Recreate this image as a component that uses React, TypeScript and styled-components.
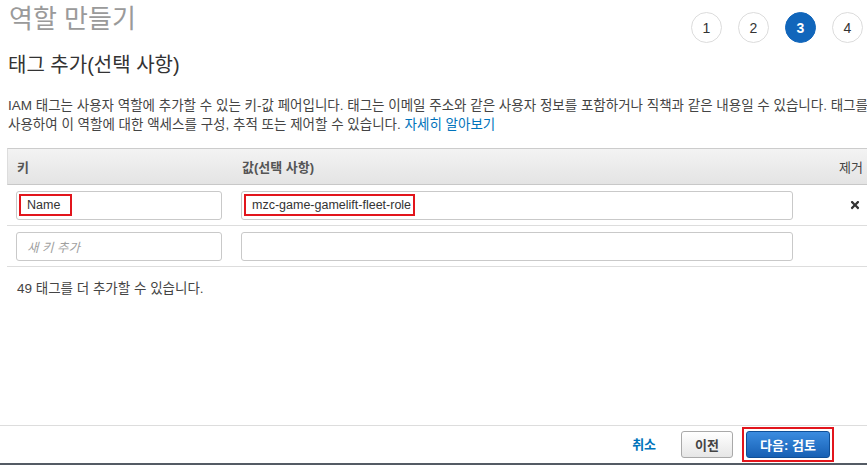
import React from "react";
import styled, { createGlobalStyle } from "styled-components";
import { FaTimes } from "react-icons/fa";

const GlobalStyle = createGlobalStyle`
  body {
    margin: 0;
    font-family: "Liberation Sans", "Noto Sans CJK KR", Arial, sans-serif;
    background: #fff;
    overflow: hidden;
  }
`;

const Page = styled.div`
  width: 867px;
  height: 465px;
  display: flex;
  flex-direction: column;
  overflow: hidden;
`;

const Content = styled.div`
  flex: 1;
  padding-left: 7px;
`;

const TopBar = styled.div`
  display: flex;
  justify-content: space-between;
  align-items: flex-start;
  height: 48px;
`;

const Title = styled.h1`
  margin: 0 0 0 2px;
  font-size: 26px;
  font-weight: 400;
  line-height: 38px;
  color: #9a9a9a;
`;

const Steps = styled.div`
  display: flex;
  gap: 16px;
  padding-top: 12px;
  padding-right: 4px;
`;

const Step = styled.div<{ $active?: boolean }>`
  width: 31px;
  height: 31px;
  box-sizing: border-box;
  border-radius: 50%;
  border: 1px solid ${(p) => (p.$active ? "#1166bb" : "#dcdcdc")};
  background: ${(p) => (p.$active ? "#1166bb" : "#fff")};
  color: ${(p) => (p.$active ? "#fff" : "#333")};
  font-size: 14px;
  font-weight: ${(p) => (p.$active ? 700 : 400)};
  display: flex;
  align-items: center;
  justify-content: center;
`;

const SubTitle = styled.h2`
  margin: 4px 0 0 1px;
  font-size: 20px;
  font-weight: 400;
  line-height: 26px;
  color: #333;
`;

const Desc = styled.p`
  margin: 18px 0 0 1px;
  font-size: 13.5px;
  line-height: 19px;
  color: #444;
  white-space: nowrap;
`;

const Link = styled.a`
  color: #0073bb;
  text-decoration: none;
`;

const Table = styled.div`
  margin-top: 14px;
  width: 862px;
`;

const Row = styled.div<{ $head?: boolean }>`
  display: grid;
  grid-template-columns: 225px 571px 1fr;
  align-items: center;
  box-sizing: border-box;
  height: ${(p) => (p.$head ? "37px" : "41px")};
  border-bottom: 1px solid ${(p) => (p.$head ? "#c8c8c8" : "#dddddd")};
  border-top: ${(p) => (p.$head ? "1px solid #cccccc" : "none")};
  border-left: ${(p) => (p.$head ? "1px solid #dddddd" : "none")};
  background: ${(p) =>
    p.$head ? "linear-gradient(#f3f3f3, #e4e4e4)" : "transparent"};
`;

const HeadCell = styled.div<{ $right?: boolean }>`
  padding: 0 ${(p) => (p.$right ? "6px" : "10px")} 0 9px;
  font-size: 13px;
  font-weight: ${(p) => (p.$right ? 400 : 700)};
  color: ${(p) => (p.$right ? "#444" : "#555")};
  text-align: ${(p) => (p.$right ? "right" : "left")};
`;

const Cell = styled.div<{ $right?: boolean }>`
  padding: 0 ${(p) => (p.$right ? "8px" : "10px")} 0 9px;
  display: flex;
  justify-content: ${(p) => (p.$right ? "flex-end" : "flex-start")};
  color: #333;
`;

const Field = styled.div<{ $placeholder?: boolean }>`
  width: 100%;
  height: 29px;
  box-sizing: border-box;
  border: 1px solid #c9c9c9;
  border-radius: 3px;
  display: flex;
  align-items: center;
  font-size: 12.5px;
  color: ${(p) => (p.$placeholder ? "#a0a0a0" : "#333")};
  font-style: ${(p) => (p.$placeholder ? "italic" : "normal")};
  padding-left: ${(p) => (p.$placeholder ? "10px" : "2px")};
`;

const Marked = styled.span<{ $width: number }>`
  display: inline-flex;
  align-items: center;
  width: ${(p) => p.$width}px;
  height: 22px;
  box-sizing: border-box;
  border: 2px solid #e2151c;
  padding-left: 6px;
  white-space: nowrap;
`;

const Remaining = styled.div`
  margin: 10px 0 0 10px;
  font-size: 13.5px;
  color: #444;
`;

const Footer = styled.div`
  height: 38px;
  box-sizing: border-box;
  border-top: 1px solid #dddddd;
  display: flex;
  justify-content: flex-end;
  align-items: center;
  padding: 0 33px 0 0;
  gap: 9px;
`;

const CancelLink = styled.a`
  color: #0073bb;
  font-size: 13px;
  font-weight: 700;
  line-height: 27px;
  margin-right: 16px;
`;

const MarkBox = styled.span`
  display: inline-flex;
  border: 2px solid #e2151c;
  padding: 2px;
`;

const Button = styled.button<{ $primary?: boolean }>`
  height: 27px;
  padding: 0 13px;
  min-width: ${(p) => (p.$primary ? "84px" : "51px")};
  border-radius: 3px;
  font: inherit;
  font-size: 13px;
  font-weight: 700;
  cursor: pointer;
  border: 1px solid ${(p) => (p.$primary ? "#0f4f97" : "#a9a9a9")};
  color: ${(p) => (p.$primary ? "#fff" : "#444")};
  background: ${(p) =>
    p.$primary
      ? "linear-gradient(#3b8ce0, #1760b4)"
      : "linear-gradient(#ffffff, #e6e6e6)"};
`;

const BottomBar = styled.div`
  height: 2px;
  background: #545b64;
`;

export default function App() {
  return (
    <Page>
      <GlobalStyle />
      <Content>
        <TopBar>
          <Title>역할 만들기</Title>
          <Steps>
            <Step>1</Step>
            <Step>2</Step>
            <Step $active>3</Step>
            <Step>4</Step>
          </Steps>
        </TopBar>
        <SubTitle>태그 추가(선택 사항)</SubTitle>
        <Desc>
          IAM 태그는 사용자 역할에 추가할 수 있는 키-값 페어입니다. 태그는 이메일 주소와 같은
          사용자 정보를 포함하거나 직책과 같은 내용일 수 있습니다. 태그를
          <br />
          사용하여 이 역할에 대한 액세스를 구성, 추적 또는 제어할 수 있습니다.{" "}
          <Link href="#">자세히 알아보기</Link>
        </Desc>
        <Table>
          <Row $head>
            <HeadCell>키</HeadCell>
            <HeadCell>값(선택 사항)</HeadCell>
            <HeadCell $right>제거</HeadCell>
          </Row>
          <Row>
            <Cell>
              <Field>
                <Marked $width={53}>Name</Marked>
              </Field>
            </Cell>
            <Cell>
              <Field>
                <Marked $width={171}>mzc-game-gamelift-fleet-role</Marked>
              </Field>
            </Cell>
            <Cell $right>
              <FaTimes size={12} color="#333" />
            </Cell>
          </Row>
          <Row>
            <Cell>
              <Field $placeholder>새 키 추가</Field>
            </Cell>
            <Cell>
              <Field />
            </Cell>
            <Cell />
          </Row>
        </Table>
        <Remaining>49 태그를 더 추가할 수 있습니다.</Remaining>
      </Content>
      <Footer>
        <CancelLink>취소</CancelLink>
        <Button>이전</Button>
        <MarkBox>
          <Button $primary>다음: 검토</Button>
        </MarkBox>
      </Footer>
      <BottomBar />
    </Page>
  );
}
